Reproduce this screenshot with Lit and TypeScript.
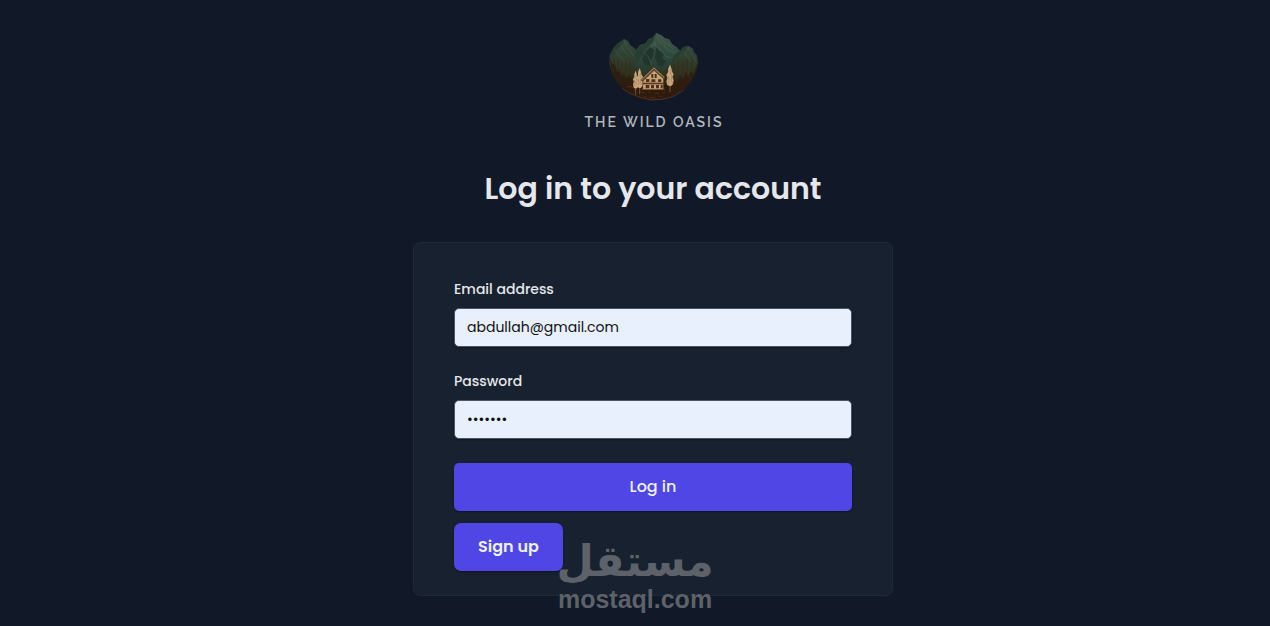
import { LitElement, html, css, svg } from "lit";
import { customElement, state } from "lit/decorators.js";

@customElement("oasis-logo")
class OasisLogo extends LitElement {
  static styles = css`
    :host { display: flex; flex-direction: column; align-items: center; }
    .scene { display: block; width: 108px; height: 80px; }
    .name {
      margin-top: 8px;
      color: #b2b6bd;
      font: 600 14px/18px Raleway, Lato, sans-serif;
      letter-spacing: 2px;
      padding-left: 2px;
      white-space: nowrap;
    }
  `;

  private tree(x: number, top: number, bottom: number, w: number) {
    const h = bottom - top;
    const y = (f: number) => top + h * f;
    return svg`
      <path d="M${x} ${top} V${bottom + 18}" stroke="#6e5034" stroke-width="3"/>
      <path d="M${x} ${top - 2} L${x + w * 0.4} ${y(0.15)} L${x + w * 0.6} ${y(0.3)} L${x + w} ${y(0.42)} L${x + w * 0.7} ${y(0.55)} L${x + w} ${y(0.72)} L${x + w * 0.8} ${y(0.9)} L${x + w * 0.2} ${bottom} L${x - w * 0.7} ${y(0.95)} L${x - w} ${y(0.78)} L${x - w * 0.7} ${y(0.6)} L${x - w} ${y(0.46)} L${x - w * 0.5} ${y(0.32)} L${x - w * 0.5} ${y(0.16)}Z" fill="#caa67c"/>
      <path d="M${x + w * 0.3} ${y(0.2)} L${x + w * 0.1} ${y(0.4)} L${x + w * 0.6} ${y(0.5)} L${x + w * 0.3} ${y(0.7)} L${x + w * 0.7} ${y(0.85)} M${x - w * 0.5} ${y(0.5)} L${x - w * 0.2} ${y(0.7)} L${x - w * 0.5} ${y(0.85)}" fill="none" stroke="#9a7850" stroke-width="2"/>
    `;
  }

  render() {
    return html`
      <svg class="scene" viewBox="-3 0 324 240" role="img" aria-label="Mountain lodge">
        <defs>
          <linearGradient id="slope" x1="0" y1="40" x2="0" y2="225" gradientUnits="userSpaceOnUse">
            <stop offset="0" stop-color="#354c3c"/>
            <stop offset=".3" stop-color="#304032"/>
            <stop offset=".58" stop-color="#30321e"/>
            <stop offset=".78" stop-color="#2f1f10"/>
            <stop offset="1" stop-color="#351b0d"/>
          </linearGradient>
          <linearGradient id="peak" x1="0" y1="24" x2="0" y2="140" gradientUnits="userSpaceOnUse">
            <stop offset="0" stop-color="#405748"/>
            <stop offset=".55" stop-color="#2f493f"/>
            <stop offset="1" stop-color="#293b2e"/>
          </linearGradient>
        </defs>
        <path d="M29 91 L43 65 L54 55 L64 48 L72 42 L84 48 L91 61 L102 68 L108 76 L121 60 L138 55 L145 43 L158 38 L169 24 L183 30 L195 40 L207 43 L217 58 L230 67 L241 77 L250 66 L264 62 L278 70 L283 83 L291 91 L294 112 L287 143 L273 169 L251 196 L218 216 L186 224 L150 226 L116 218 L83 202 L55 177 L36 146 L28 114Z" fill="url(#slope)"/>
        <path d="M108 76 L121 60 L138 55 L145 43 L158 38 L169 24 L183 30 L195 40 L207 43 L217 58 L230 67 L239 78 L221 96 L214 115 L190 140 L163 127 L135 143 L112 140 L105 105Z" fill="url(#peak)"/>
        <path d="M169 25 L159 49 L147 65 L137 71 L130 91 L118 100 L108 125 L105 91 L111 73 L123 60 L139 55 L145 43 L158 38Z" fill="#293e32"/>
        <path d="M137 80 L151 67 L162 75 L158 94 L149 108 L154 122 L135 119 L127 101Z M169 65 L177 77 L191 86 L186 101 L199 107 L186 125 L173 117 L165 98Z" fill="#20352b"/>
        <path d="M170 30 L176 48 L190 57 L202 74 L219 83 L229 79 M182 34 L193 52 L208 59 L221 77 M163 48 L169 65 L185 77 L198 94 L212 98 M149 62 L166 59 M132 82 L145 96 L155 119" fill="none" stroke="#56695a" stroke-width="3" opacity=".5"/>
        <path d="M72 43 L67 60 L54 69 L44 87 L34 99 L31 88 L43 65 L54 55Z M264 63 L254 77 L241 84 L229 102 L216 112 L221 94 L239 78 L250 66Z" fill="#293c31"/>
        <path d="M73 48 L78 65 L91 77 L99 93 M62 58 L72 79 L87 94 M265 66 L268 79 L281 92 L287 110 M253 82 L263 95 L274 114 M45 75 L57 91 L70 106" fill="none" stroke="#4e5e4b" stroke-width="3" opacity=".5"/>
        <path d="M29 96 L38 120 L44 114 L51 140 L57 132 L64 154 L72 143 L79 163 L88 149 L97 167 L104 158 L114 180 L211 181 L222 162 L232 172 L241 150 L249 164 L258 141 L265 158 L273 138 L280 148 L291 118 L287 143 L273 169 L251 196 L218 216 L186 224 L150 226 L116 218 L83 202 L55 177 L36 146Z" fill="#2d1c0e" opacity=".85"/>
        <path d="M43 100 V124 M54 104 V140 M66 110 V145 M79 108 V149 M91 112 V151 M223 116 V157 M235 108 V155 M248 110 V149 M261 103 V143 M274 106 V134" stroke="#352b18" stroke-width="4" opacity=".7"/>
        ${this.tree(107, 139, 191, 8)}
        ${this.tree(119, 132, 190, 10)}
        ${this.tree(210, 121, 184, 11)}
        <path d="M130 166 L163 135 L190 160 V193 H129Z" fill="#c7a378"/>
        <path d="M121 165 L162 126 L194 156 L191 163 L162 137 L128 170Z" fill="#5f4632"/>
        <path d="M124 165 L162 129 L193 158" fill="none" stroke="#c7a784" stroke-width="2"/>
        <path d="M154 147 h6 v12 h-6z M164 147 h6 v12 h-6z M138 162 h10 v9 h-10z M154 163 h12 v8 h-12z M174 163 h10 v8 h-10z M137 180 h11 v10 h-11z M153 180 h9 v10 h-9z M168 180 h9 v10 h-9z M182 180 h6 v10 h-6z" fill="#4c301c"/>
        <path d="M127 173 H193 V178 H127Z" fill="#573a21"/>
        <path d="M125 193 H194" stroke="#8a623b" stroke-width="2"/>
        <path d="M79 187 Q91 179 103 191 L105 198 M66 190 L88 204 L118 216 L153 225 L187 223 L219 215 L250 196" fill="none" stroke="#574027" stroke-width="2"/>
        <path d="M120 203 h12 M145 202 h7 M164 205 h13 M187 203 h8 M132 215 h8 M150 218 h16 M178 214 h7" stroke="#5b2417" stroke-width="3"/>
      </svg>
      <div class="name">THE WILD OASIS</div>
    `;
  }
}

@customElement("app-root")
class AppRoot extends LitElement {
  static styles = css`
    :host {
      display: block;
      min-height: 100vh;
      box-sizing: border-box;
      position: relative;
      background: #111827;
      color: #e5e7eb;
      font-family: Poppins, Inter, sans-serif;
    }
    * { box-sizing: border-box; }
    .page {
      display: flex;
      flex-direction: column;
      align-items: center;
      padding: 25px 0 30px 36px;
    }
    h1 {
      margin: 36px 0 32px;
      font-size: 30px;
      font-weight: 600;
      line-height: 43px;
      text-align: center;
    }
    .card {
      position: relative;
      width: 100%;
      max-width: 480px;
      padding: 36px 40px 24px;
      border: 1px solid #1f2937;
      border-radius: 7px;
      background: #18212f;
    }
    .field { display: flex; flex-direction: column; gap: 8px; margin-bottom: 24px; }
    label { font-size: 14px; font-weight: 500; line-height: 21px; }
    input {
      width: 100%;
      height: 39px;
      padding: 0 12px;
      border: 1px solid #4b5563;
      border-radius: 5px;
      background: #e8f0fe;
      color: #101010;
      font: 400 14px/20px Poppins, Inter, sans-serif;
      box-shadow: 0 1px 2px rgba(0, 0, 0, 0.4);
      outline: none;
    }
    input:focus-visible, button:focus-visible { outline: 2px solid #4f46e5; outline-offset: 1px; }
    .actions { display: flex; flex-direction: column; align-items: flex-start; gap: 12px; }
    button {
      height: 48px;
      padding: 0 24px;
      border: none;
      border-radius: 5px;
      background: #4f46e5;
      color: #eef2ff;
      font: 500 16px/24px Poppins, Inter, sans-serif;
      box-shadow: 0 1px 2px rgba(0, 0, 0, 0.4);
      cursor: pointer;
    }
    .login { width: 100%; }
    .signup { border-radius: 7px; font-weight: 600; }
    .mark {
      position: absolute;
      left: 144px;
      bottom: -18px;
      width: 154px;
      display: flex;
      flex-direction: column;
      align-items: center;
      color: #5d616a;
      pointer-events: none;
      white-space: nowrap;
    }
    .mark-ar { font: 700 43px/48px "DejaVu Sans", sans-serif; }
    .mark-en { font: 700 25px/28px "Liberation Sans", sans-serif; }
  `;

  @state() private email = "abdullah@gmail.com";
  @state() private password = "1234567";

  render() {
    return html`
      <main class="page">
        <oasis-logo></oasis-logo>
        <h1>Log in to your account</h1>
        <form class="card" @submit=${(e: Event) => e.preventDefault()}>
          <div class="field">
            <label for="email">Email address</label>
            <input id="email" type="email" autocomplete="username" .value=${this.email}
              @input=${(e: Event) => (this.email = (e.target as HTMLInputElement).value)} />
          </div>
          <div class="field">
            <label for="password">Password</label>
            <input id="password" type="password" autocomplete="current-password" .value=${this.password}
              @input=${(e: Event) => (this.password = (e.target as HTMLInputElement).value)} />
          </div>
          <div class="actions">
            <button class="login" type="submit">Log in</button>
            <button class="signup" type="button">Sign up</button>
          </div>
          <div class="mark">
            <span class="mark-ar" lang="ar" dir="rtl">مستقل</span>
            <span class="mark-en">mostaql.com</span>
          </div>
        </form>
      </main>
    `;
  }
}
